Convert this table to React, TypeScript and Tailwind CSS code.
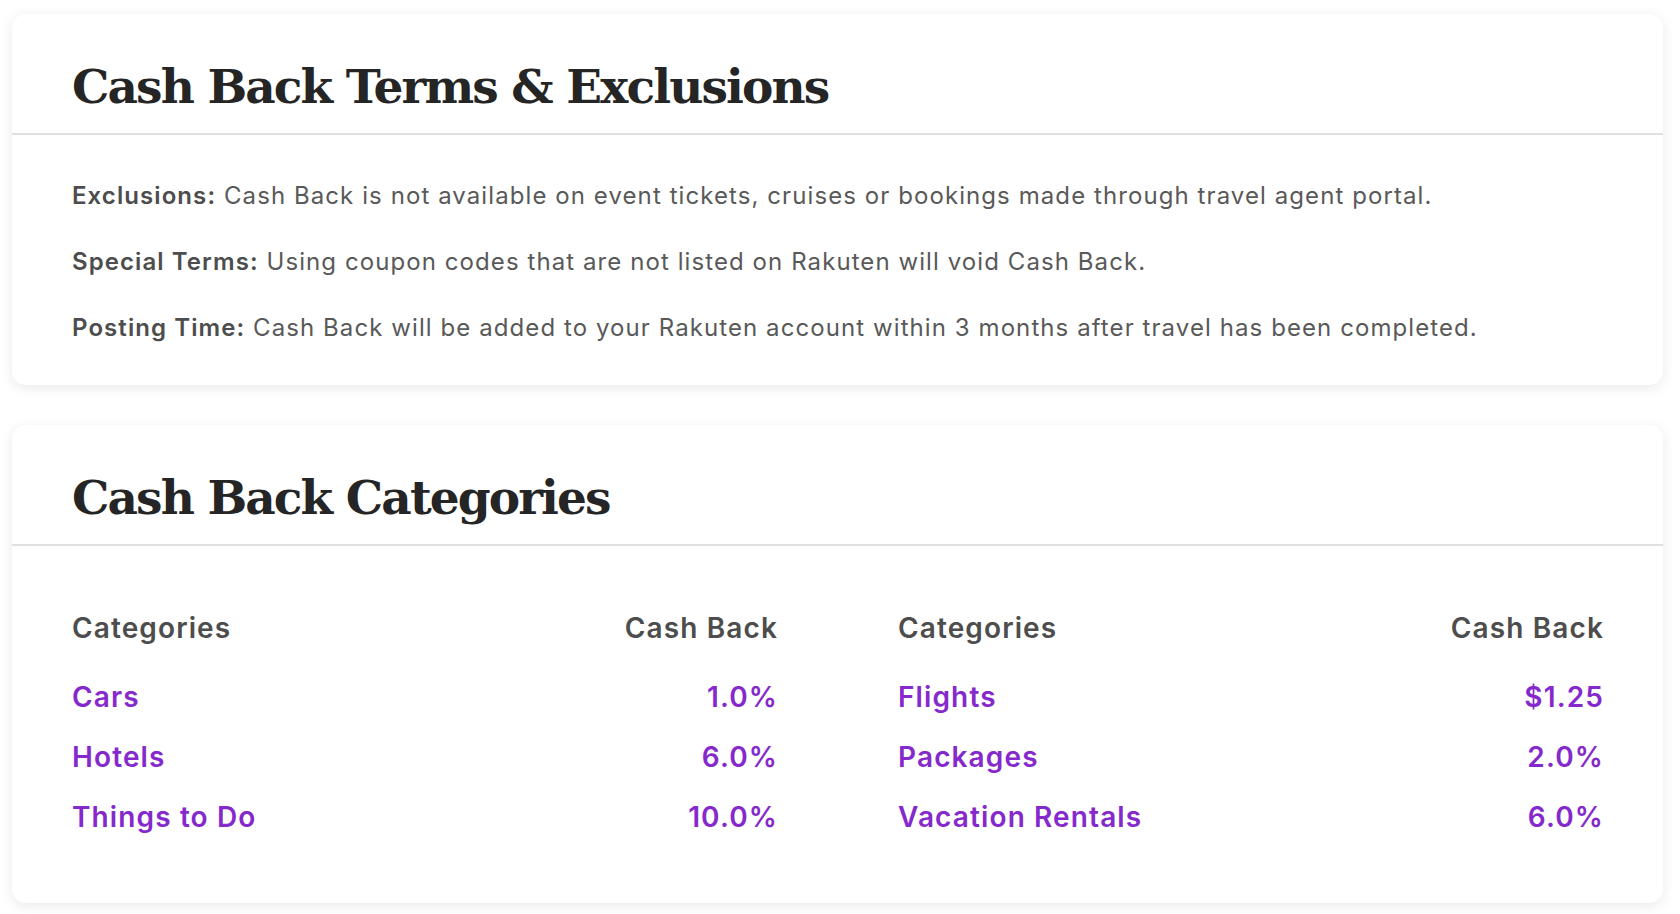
const serif = "font-['DejaVu_Serif',serif]";
const sans = "font-['Inter','Noto_Sans',sans-serif]";

const terms = [
  { label: "Exclusions:", text: "Cash Back is not available on event tickets, cruises or bookings made through travel agent portal." },
  { label: "Special Terms:", text: "Using coupon codes that are not listed on Rakuten will void Cash Back." },
  { label: "Posting Time:", text: "Cash Back will be added to your Rakuten account within 3 months after travel has been completed." },
];

const columns = [
  [
    { name: "Cars", rate: "1.0%" },
    { name: "Hotels", rate: "6.0%" },
    { name: "Things to Do", rate: "10.0%" },
  ],
  [
    { name: "Flights", rate: "$1.25" },
    { name: "Packages", rate: "2.0%" },
    { name: "Vacation Rentals", rate: "6.0%" },
  ],
];

function CardHeader({ title }: { title: string }) {
  return (
    <div className="h-[121px] border-b-2 border-[#e0e0e0] px-[60px] pt-[45px]">
      <h2 className={`${serif} text-[47px] leading-[56px] font-bold tracking-[-0.04em] text-[#252525]`}>{title}</h2>
    </div>
  );
}

export default function App() {
  return (
    <div className={`min-h-[914px] bg-white pr-[17px] pl-[12px] pt-[14px] ${sans}`}>
      <section className="rounded-[14px] bg-white shadow-[0_3px_14px_rgba(0,0,0,0.09)]">
        <CardHeader title="Cash Back Terms & Exclusions" />
        <div className="space-y-[34px] px-[60px] pt-[45px] pb-[41px] text-[24px] leading-[32px] tracking-[0.045em] text-[#595959]">
          {terms.map((t) => (
            <p key={t.label}>
              <span className="font-semibold text-[#4d4d4d]">{t.label}</span> {t.text}
            </p>
          ))}
        </div>
      </section>

      <section className="mt-[40px] rounded-[14px] bg-white shadow-[0_3px_14px_rgba(0,0,0,0.09)]">
        <CardHeader title="Cash Back Categories" />
        <div className="grid grid-cols-2 gap-x-[121px] px-[60px] pt-[64px] pb-[68px] text-[28px] leading-[36px] font-semibold tracking-[0.04em]">
          {columns.map((col, i) => (
            <div key={i}>
              <div className="flex justify-between text-[#4d4d4d]">
                <span>Categories</span>
                <span className="-mr-[1px]">Cash Back</span>
              </div>
              <div className="mt-[33px] space-y-[24px]">
                {col.map((r) => (
                  <div key={r.name} className="flex justify-between text-[#8529cd]">
                    <span>{r.name}</span>
                    <span className="-mr-[1px]">{r.rate}</span>
                  </div>
                ))}
              </div>
            </div>
          ))}
        </div>
      </section>
    </div>
  );
}
